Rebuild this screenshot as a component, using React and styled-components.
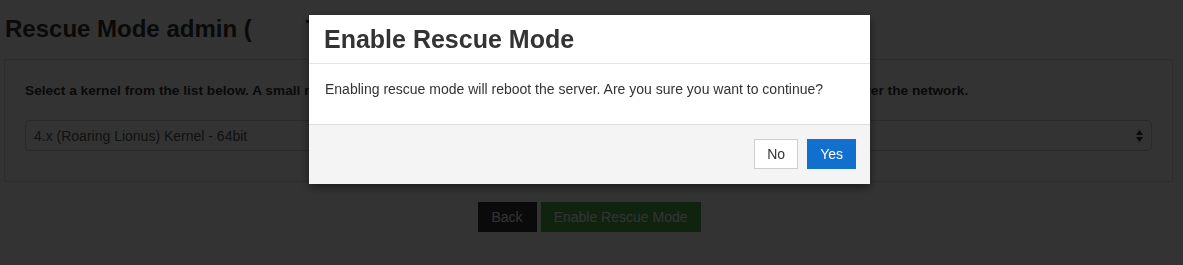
import React from "react";
import styled, { createGlobalStyle } from "styled-components";

const GlobalStyle = createGlobalStyle`
  html, body {
    margin: 0;
    padding: 0;
    background: #fff;
    font-family: "Liberation Sans", Arial, Helvetica, sans-serif;
    color: #333;
  }
`;

const Page = styled.div`
  padding: 0 10px 0 4px;
  width: 1183px;
  height: 265px;
  box-sizing: border-box;
  overflow: hidden;
`;

const Heading = styled.h1`
  display: flex;
  margin: 16px 0 17px 1px;
  font-size: 24px;
  line-height: 26px;
  font-weight: bold;
  color: #333;
  white-space: nowrap;
`;

const HostName = styled.span`
  margin-left: 54px;
`;

const Panel = styled.div`
  border: 1px solid #ddd;
  padding: 21px 20px 30px;
`;

const Lead = styled.p`
  margin: 0 0 20px;
  font-size: 13.7px;
  line-height: 19px;
  font-weight: bold;
  white-space: nowrap;
`;

const SelectBox = styled.div`
  display: flex;
  align-items: center;
  justify-content: space-between;
  height: 29px;
  border: 1px solid #ccc;
  border-radius: 5px;
  padding: 0 8px;
  font-size: 14px;
  color: #555;
`;

const Arrows = styled.span`
  display: flex;
  flex-direction: column;
  align-items: center;
  gap: 2px;
  color: #333;
`;

const Actions = styled.div`
  display: flex;
  justify-content: center;
  gap: 4px;
  margin-top: 20px;
  padding-left: 1px;
`;

const PageButton = styled.button`
  height: 30px;
  padding: 0 ${(p) => (p.$green ? "13px" : "14px")};
  border: none;
  border-radius: 0;
  font-family: inherit;
  font-size: 14px;
  color: #fff;
  background: ${(p) => (p.$green ? "#4cae4c" : "#333")};
`;

const Backdrop = styled.div`
  position: fixed;
  inset: 0;
  background: rgba(0, 0, 0, 0.8);
`;

const Modal = styled.div`
  position: fixed;
  top: 15px;
  left: 309px;
  width: 561px;
  background: #fff;
  box-shadow: 0 3px 9px rgba(0, 0, 0, 0.5);
`;

const ModalHeader = styled.div`
  padding: 12px 15px 11px;
  border-bottom: 1px solid #e5e5e5;
`;

const ModalTitle = styled.h2`
  margin: 0;
  font-size: 25px;
  line-height: 25px;
  font-weight: bold;
  color: #333;
`;

const ModalBody = styled.div`
  padding: 15px 15px 15px 16px;
  p {
    margin: 0 0 10px;
    font-size: 14px;
    line-height: 20px;
    color: #333;
  }
`;

const ModalFooter = styled.div`
  display: flex;
  justify-content: flex-end;
  gap: 9px;
  padding: 14px 14px 15px;
  background: #f4f4f4;
  border-top: 1px solid #ddd;
`;

const DialogButton = styled.button`
  height: 30px;
  padding: 0 12px;
  font-family: inherit;
  font-size: 14px;
  border-radius: 0;
  border: 1px solid ${(p) => (p.$primary ? "#1170cd" : "#ccc")};
  background: ${(p) => (p.$primary ? "#1170cd" : "#fff")};
  color: ${(p) => (p.$primary ? "#fff" : "#333")};
`;

export default function App() {
  return (
    <>
      <GlobalStyle />
      <Page>
        <Heading>
          Rescue Mode admin (<HostName>T</HostName>
        </Heading>
        <Panel>
          <Lead>
            Select a kernel from the list below. A small rescue system will be
            loaded into memory so that you can log in to repair the server
            over the network.
          </Lead>
          <SelectBox>
            <span>4.x (Roaring Lionus) Kernel - 64bit</span>
            <Arrows>
              <svg width="7" height="5" viewBox="0 0 7 5">
                <path d="M3.5 0L7 5H0z" fill="currentColor" />
              </svg>
              <svg width="7" height="5" viewBox="0 0 7 5">
                <path d="M0 0h7L3.5 5z" fill="currentColor" />
              </svg>
            </Arrows>
          </SelectBox>
        </Panel>
        <Actions>
          <PageButton>Back</PageButton>
          <PageButton $green>Enable Rescue Mode</PageButton>
        </Actions>
      </Page>
      <Backdrop />
      <Modal>
        <ModalHeader>
          <ModalTitle>Enable Rescue Mode</ModalTitle>
        </ModalHeader>
        <ModalBody>
          <p>
            Enabling rescue mode will reboot the server. Are you sure you want
            to continue?
          </p>
        </ModalBody>
        <ModalFooter>
          <DialogButton>No</DialogButton>
          <DialogButton $primary>Yes</DialogButton>
        </ModalFooter>
      </Modal>
    </>
  );
}
